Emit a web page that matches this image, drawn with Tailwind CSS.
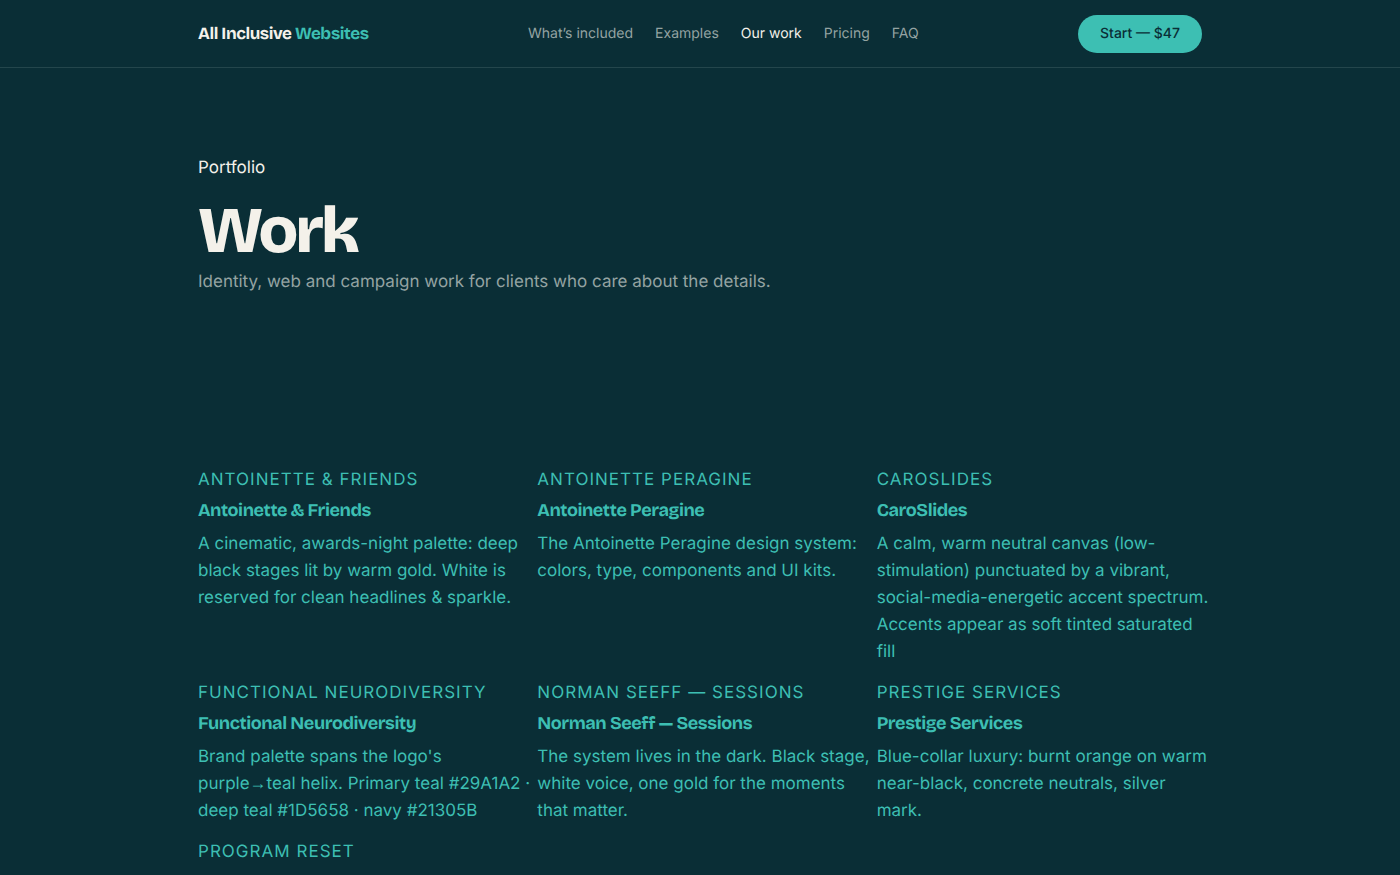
<!DOCTYPE html>
<html lang="en">
<head>
  <meta charset="UTF-8" />
  <meta name="viewport" content="width=device-width, initial-scale=1.0"/>
  <title>Work | All Inclusive Websites</title>
  <script src="https://cdn.jsdelivr.net/npm/@tailwindcss/browser@4"></script>
</head>
<body class="bg-[#0a2e36] font-['Inter',sans-serif] text-[17px] leading-[27px] text-[#f4f1ea] min-h-screen [text-rendering:geometricPrecision]">

  <!-- Header -->
  <header class="border-b border-[#24464c]">
    <div class="max-w-[1052px] mx-auto px-6 h-[67px] flex items-center justify-between">
      <a href="#" class="font-['Bricolage_Grotesque','Inter',sans-serif] text-[17px] font-bold tracking-tight">All Inclusive <span class="text-[#3dbfb3]">Websites</span></a>
      <nav class="flex gap-[22px] text-sm text-[#94a3a2]">
        <a href="#">What’s included</a>
        <a href="#">Examples</a>
        <a href="#" class="text-[#f4f1ea]" aria-current="page">Our work</a>
        <a href="#">Pricing</a>
        <a href="#">FAQ</a>
      </nav>
      <a href="#" class="bg-[#3dbfb3] text-[#0a2e36] text-sm font-medium rounded-full px-[22px] py-[9px] leading-5">Start — $47</a>
    </div>
  </header>

  <main class="max-w-[1052px] mx-auto px-6">
    <!-- Intro -->
    <section class="pt-[87px] pb-[171px]">
      <p>Portfolio</p>
      <h1 class="mt-[15px] font-['Bricolage_Grotesque','Inter',sans-serif] text-[65px] leading-[68px] font-extrabold tracking-tighter">Work</h1>
      <p class="mt-[3px] text-[17px] leading-7 text-[#94a3a2]">Identity, web and campaign work for clients who care about the details.</p>
    </section>

    <!-- Projects -->
    <section class="grid grid-cols-3 gap-x-1 gap-y-3.5 -mr-2.5 text-[#3dbfb3]">
      <a href="#">
        <p class="uppercase tracking-[0.06em]">Antoinette &amp; Friends</p>
        <h2 class="mt-[3px] font-['Bricolage_Grotesque','Inter',sans-serif] text-[18px] font-bold tracking-tight">Antoinette &amp; Friends</h2>
        <p class="mt-[7px]">A cinematic, awards-night palette: deep black stages lit by warm gold. White is reserved for clean headlines &amp; sparkle.</p>
      </a>
      <a href="#">
        <p class="uppercase tracking-[0.06em]">Antoinette Peragine</p>
        <h2 class="mt-[3px] font-['Bricolage_Grotesque','Inter',sans-serif] text-[18px] font-bold tracking-tight">Antoinette Peragine</h2>
        <p class="mt-[7px]">The Antoinette Peragine design system: colors, type, components and UI kits.</p>
      </a>
      <a href="#">
        <p class="uppercase tracking-[0.06em]">CaroSlides</p>
        <h2 class="mt-[3px] font-['Bricolage_Grotesque','Inter',sans-serif] text-[18px] font-bold tracking-tight">CaroSlides</h2>
        <p class="mt-[7px]">A calm, warm neutral canvas (low-stimulation) punctuated by a vibrant, social-media-energetic accent spectrum. Accents appear as soft tinted saturated fill</p>
      </a>
      <a href="#">
        <p class="uppercase tracking-[0.06em]">Functional Neurodiversity</p>
        <h2 class="mt-[3px] font-['Bricolage_Grotesque','Inter',sans-serif] text-[18px] font-bold tracking-tight">Functional Neurodiversity</h2>
        <p class="mt-[7px]">Brand palette spans the logo's purple<span class="font-['Liberation_Sans',sans-serif] leading-none">→</span>teal helix. Primary teal #29A1A2 · deep teal #1D5658 · navy #21305B</p>
      </a>
      <a href="#">
        <p class="uppercase tracking-[0.06em]">Norman Seeff — Sessions</p>
        <h2 class="mt-[3px] font-['Bricolage_Grotesque','Inter',sans-serif] text-[18px] font-bold tracking-tight">Norman Seeff — Sessions</h2>
        <p class="mt-[7px]">The system lives in the dark. Black stage, white voice, one gold for the moments that matter.</p>
      </a>
      <a href="#">
        <p class="uppercase tracking-[0.06em]">Prestige Services</p>
        <h2 class="mt-[3px] font-['Bricolage_Grotesque','Inter',sans-serif] text-[18px] font-bold tracking-tight">Prestige Services</h2>
        <p class="mt-[7px]">Blue-collar luxury: burnt orange on warm near-black, concrete neutrals, silver mark.</p>
      </a>
      <a href="#">
        <p class="uppercase tracking-[0.06em]">Program Reset</p>
      </a>
    </section>
  </main>
</body>
</html>
